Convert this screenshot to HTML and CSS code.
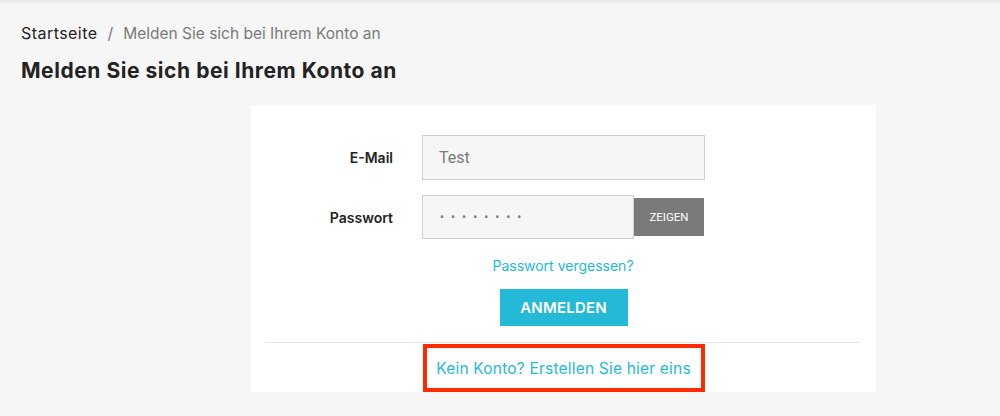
FILE: index.html
```html
<!DOCTYPE html>
<html lang="de">
<head>
<meta charset="utf-8">
<title>Anmelden</title>
<link rel="stylesheet" href="styles.css">
</head>
<body>
<div class="page">
  <nav class="breadcrumb">
    <a class="crumb-home" href="#">Startseite</a>
    <span class="sep">/</span>
    <span class="crumb-current">Melden Sie sich bei Ihrem Konto an</span>
  </nav>
  <h1 class="title">Melden Sie sich bei Ihrem Konto an</h1>
  <section class="card">
    <form class="login-form">
      <div class="row">
        <label class="label">E-Mail</label>
        <div class="field"><input class="input input-email" type="text" value="Test"></div>
      </div>
      <div class="row">
        <label class="label">Passwort</label>
        <div class="field pw-group">
          <input class="input input-pw" type="text" value="••••••••">
          <button type="button" class="btn-show">ZEIGEN</button>
        </div>
      </div>
      <div class="forgot"><a href="#">Passwort vergessen?</a></div>
      <div class="submit-wrap"><button type="button" class="btn-submit">ANMELDEN</button></div>
    </form>
    <hr class="divider">
    <div class="register">
      <a class="register-link" href="#">Kein Konto? Erstellen Sie hier eins</a>
    </div>
  </section>
</div>
</body>
</html>
```

FILE: styles.css
```css
* { box-sizing: border-box; }
html, body { margin: 0; padding: 0; }
body {
  background: #f6f6f6;
  font-family: "Inter", "Open Sans", sans-serif;
  color: #232323;
  box-shadow: inset 0 4px 4px -3px rgba(0,0,0,0.08);
  min-height: 416px;
}
.page { padding: 23px 0 0 21px; }
.breadcrumb {
  font-size: 16px;
  line-height: 20px;
  color: #7a7a7a;
  display: flex;
  align-items: baseline;
  gap: 9px;
}
.crumb-home { color: #232323; text-decoration: none; letter-spacing: 0.45px; }
.sep { margin-left: 1px; }
.crumb-current { font-size: 15.5px; letter-spacing: 0; margin-left: 1px; }
.title {
  margin: 14px 0 0;
  font-size: 21px;
  line-height: 26px;
  font-weight: 700;
  color: #232323;
  letter-spacing: 0.55px;
}
.card {
  margin: 21px 0 0 230px;
  width: 625px;
  height: 287px;
  background: #fff;
  padding: 30px 16px 0 15px;
}
.row {
  display: flex;
  align-items: center;
  margin-bottom: 15px;
}
.label {
  width: 127px;
  text-align: right;
  font-size: 14px;
  font-weight: 600;
  color: #232323;
}
.field { margin-left: 29px; display: flex; align-items: center; }
.input {
  height: 45px;
  border: 1px solid #d0d0d0;
  background: #f6f6f6;
  font-family: "Roboto", "Inter", sans-serif;
  font-size: 16px;
  color: #7a7a7a;
  padding: 0 16px;
  outline: none;
}
.input-email { width: 283px; }
.input-pw { width: 212px; height: 44px; letter-spacing: 7px; font-size: 12px; padding-left: 17px; }
.btn-show {
  width: 70px;
  height: 38px;
  border: 0;
  background: #7a7a7a;
  color: #fff;
  font-family: "Roboto", sans-serif;
  font-size: 11.5px;
  padding: 0;
}
.forgot {
  margin: 17px 0 0 156px;
  width: 282px;
  text-align: center;
  font-size: 14px;
  line-height: 20px;
}
.forgot a { color: #24b9d7; text-decoration: none; }
.submit-wrap { margin: 13px 0 0 156px; width: 282px; display: flex; justify-content: center; }
.btn-submit {
  width: 128px;
  height: 37px;
  border: 0;
  background: #24b9d7;
  color: #fff;
  font-family: "Inter", sans-serif;
  font-size: 15px;
  font-weight: 600;
  letter-spacing: 0.2px;
  margin-left: 1px;
}
.divider {
  margin: 16px 0 0;
  border: 0;
  border-top: 1px solid #e6e6e6;
  width: 595px;
  margin-left: -1px;
}
.register {
  display: flex;
  justify-content: center;
  margin-top: 1px;
}
.register-link {
  display: flex;
  align-items: center;
  justify-content: center;
  width: 282px;
  height: 48px;
  border: 4px solid #ff2a00;
  color: #24b9d7;
  text-decoration: none;
  font-size: 15.5px;
  letter-spacing: 0.2px;
  margin-left: 1px;
}
```
